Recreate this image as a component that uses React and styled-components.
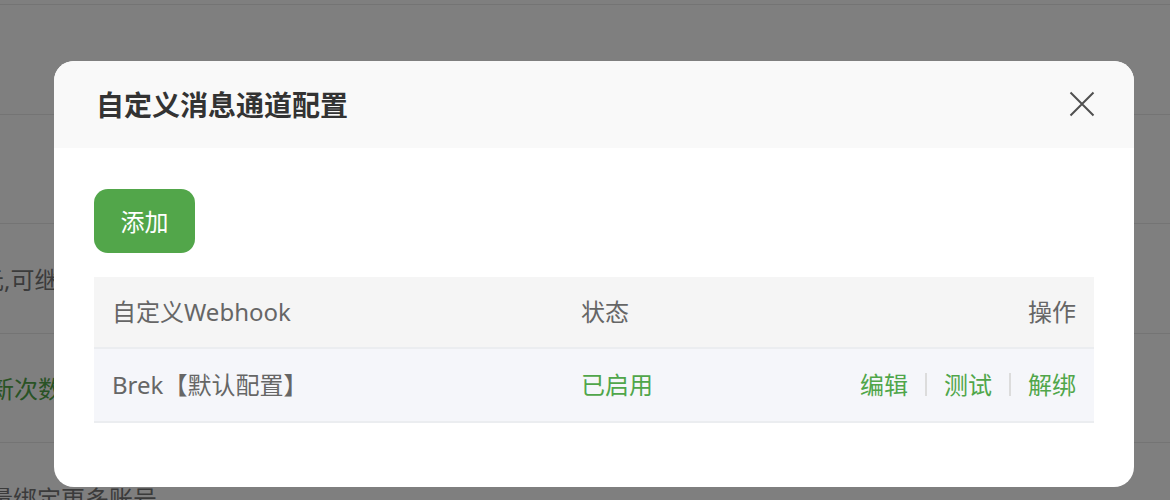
import React from "react";
import styled, { createGlobalStyle } from "styled-components";

const GlobalStyle = createGlobalStyle`
  html, body { margin: 0; padding: 0; }
  body {
    font-family: "Noto Sans", "Noto Sans CJK SC", sans-serif;
    background: #ffffff;
  }
  #root { width: 1170px; height: 500px; position: relative; overflow: hidden; }
`;

const Page = styled.div`
  width: 100%;
  height: 100%;
  background: #ffffff;
  overflow: hidden;
`;

const TopStrip = styled.div`
  height: 4px;
  border-bottom: 1px solid #e8e8e8;
`;

const PageRow = styled.div`
  height: 108.5px;
  border-bottom: 1px solid #e8e8e8;
  display: flex;
  align-items: center;
  overflow: hidden;
`;

const PageText = styled.span`
  font-size: 24px;
  white-space: nowrap;
  color: ${(p) => (p.$green ? "#52a64a" : "#777777")};
  margin-left: ${(p) => p.$shift}px;
`;

const Overlay = styled.div`
  position: absolute;
  inset: 0;
  background: rgba(0, 0, 0, 0.5);
`;

const Modal = styled.div`
  position: absolute;
  left: 54px;
  top: 61px;
  width: 1080px;
  background: #ffffff;
  border-radius: 20px;
  overflow: hidden;
`;

const ModalHeader = styled.div`
  height: 87px;
  background: #f9f9f9;
  display: flex;
  align-items: center;
  justify-content: space-between;
  padding: 0 40px 2px 42px;
  box-sizing: border-box;
`;

const Title = styled.h2`
  margin: 0;
  font-size: 28px;
  font-weight: 600;
  color: #333333;
`;

const CloseButton = styled.button`
  width: 26px;
  height: 26px;
  padding: 0;
  margin-right: -1px;
  border: none;
  background: transparent;
  display: flex;
  align-items: center;
  justify-content: center;
  cursor: pointer;
`;

const ModalBody = styled.div`
  padding: 41px 40px 64px;
  display: flex;
  flex-direction: column;
  align-items: flex-start;
`;

const AddButton = styled.button`
  width: 101px;
  height: 64px;
  border: none;
  border-radius: 14px;
  background: #52a64a;
  color: #ffffff;
  font-family: inherit;
  font-size: 24px;
  margin-bottom: 24px;
  padding: 0 0 2px;
  cursor: pointer;
`;

const Table = styled.div`
  width: 100%;
  display: flex;
  flex-direction: column;
`;

const TableRow = styled.div`
  box-sizing: border-box;
  display: grid;
  grid-template-columns: 469px 1fr auto;
  align-items: center;
  padding: 0 18px 3px;
  height: ${(p) => (p.$head ? "72px" : "73.5px")};
  background: ${(p) => (p.$head ? "#f5f5f5" : "#f5f6fa")};
  border-bottom: 2px solid #ebedf0;
  font-size: 24px;
  color: #666666;
`;

const Cell = styled.div`
  white-space: nowrap;
  color: ${(p) => (p.$green ? "#50a64a" : "#666666")};
  justify-self: ${(p) => (p.$right ? "end" : "start")};
  display: flex;
  align-items: center;
`;

const ActionLink = styled.span`
  color: #50a64a;
  cursor: pointer;
`;

const Divider = styled.span`
  width: 2px;
  height: 23px;
  background: #dcdcdc;
  margin: 3px 17px 0;
`;

const CloseIcon = () => (
  <svg width="26" height="26" viewBox="0 0 26 26">
    <path d="M1.5 1.5L24.5 24.5M24.5 1.5L1.5 24.5" stroke="#505050" strokeWidth="2" fill="none" />
  </svg>
);

export default function App() {
  return (
    <>
      <GlobalStyle />
      <Page>
        <TopStrip />
        <PageRow />
        <PageRow />
        <PageRow>
          <PageText $shift={-20}>元,可继续使用</PageText>
        </PageRow>
        <PageRow>
          <PageText $shift={-10} $green>新次数</PageText>
        </PageRow>
        <PageRow>
          <PageText $shift={-11}>量绑定更多账号</PageText>
        </PageRow>
      </Page>
      <Overlay />
      <Modal>
        <ModalHeader>
          <Title>自定义消息通道配置</Title>
          <CloseButton aria-label="关闭">
            <CloseIcon />
          </CloseButton>
        </ModalHeader>
        <ModalBody>
          <AddButton>添加</AddButton>
          <Table>
            <TableRow $head>
              <Cell>自定义Webhook</Cell>
              <Cell>状态</Cell>
              <Cell $right>操作</Cell>
            </TableRow>
            <TableRow>
              <Cell>Brek【默认配置】</Cell>
              <Cell $green>已启用</Cell>
              <Cell $right>
                <ActionLink>编辑</ActionLink>
                <Divider />
                <ActionLink>测试</ActionLink>
                <Divider />
                <ActionLink>解绑</ActionLink>
              </Cell>
            </TableRow>
          </Table>
        </ModalBody>
      </Modal>
    </>
  );
}
